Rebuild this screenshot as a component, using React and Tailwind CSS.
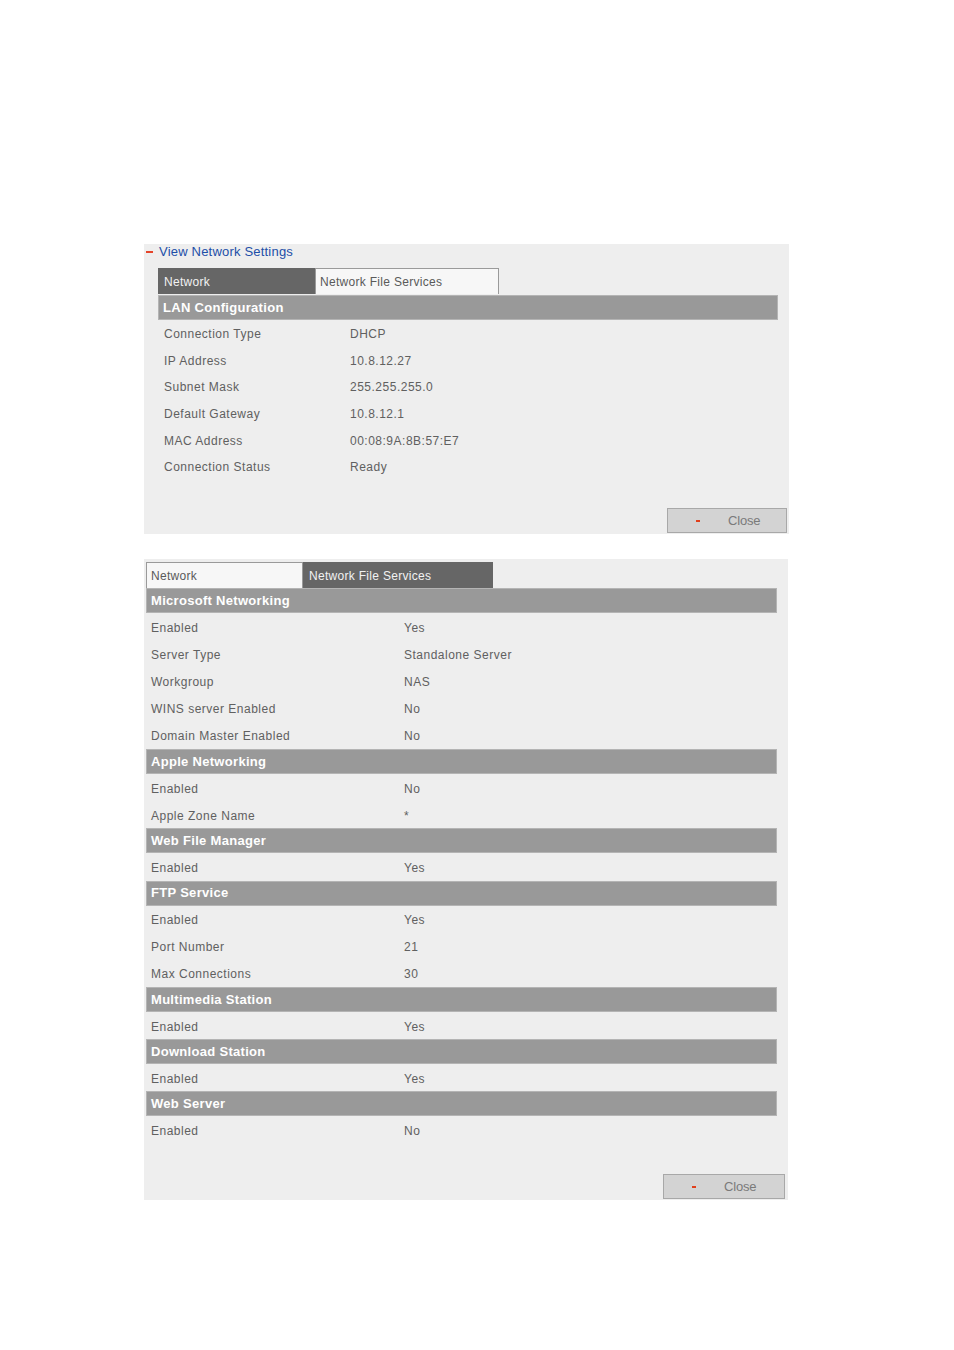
const font = "font-['Liberation_Sans',Arial,sans-serif]";

const lan = [
  ["Connection Type", "DHCP"],
  ["IP Address", "10.8.12.27"],
  ["Subnet Mask", "255.255.255.0"],
  ["Default Gateway", "10.8.12.1"],
  ["MAC Address", "00:08:9A:8B:57:E7"],
  ["Connection Status", "Ready"],
];

const services = [
  {
    title: "Microsoft Networking",
    rows: [
      ["Enabled", "Yes"],
      ["Server Type", "Standalone Server"],
      ["Workgroup", "NAS"],
      ["WINS server Enabled", "No"],
      ["Domain Master Enabled", "No"],
    ],
  },
  { title: "Apple Networking", rows: [["Enabled", "No"], ["Apple Zone Name", "*"]] },
  { title: "Web File Manager", rows: [["Enabled", "Yes"]] },
  {
    title: "FTP Service",
    rows: [
      ["Enabled", "Yes"],
      ["Port Number", "21"],
      ["Max Connections", "30"],
    ],
  },
  { title: "Multimedia Station", rows: [["Enabled", "Yes"]] },
  { title: "Download Station", rows: [["Enabled", "Yes"]] },
  { title: "Web Server", rows: [["Enabled", "No"]] },
];

function SectionBar({ children }) {
  return (
    <div
      className={`flex h-[25px] items-center border border-[#b4b4b4] bg-[#999999] pl-[4px] text-[13px] font-bold tracking-[0.3px] text-white ${font}`}
    >
      {children}
    </div>
  );
}

function Tab({ active, width, children }) {
  return active ? (
    <div
      className={`flex h-[26px] items-center bg-[#666666] pl-[6px] pt-[1px] text-[12px] tracking-[0.3px] text-[#f2f2f2] ${font}`}
      style={{ width }}
    >
      {children}
    </div>
  ) : (
    <div
      className={`flex h-[26px] items-center border border-b-0 border-[#9a9a9a] bg-[#f7f7f7] pl-[4px] pt-[1px] text-[12px] tracking-[0.3px] text-[#5a5a5a] ${font}`}
      style={{ width }}
    >
      {children}
    </div>
  );
}

function Row({ label, value, valueX, labelX, h }) {
  return (
    <div
      className={`flex items-center pt-[2px] text-[12px] tracking-[0.5px] text-[#606060] ${font}`}
      style={{ height: h }}
    >
      <span style={{ width: valueX, paddingLeft: labelX }} className="shrink-0">
        {label}
      </span>
      <span>{value}</span>
    </div>
  );
}

function CloseButton({ width }) {
  return (
    <button
      type="button"
      className={`flex h-[25px] items-center border border-[#a8a8a8] bg-[#d3d3d3] pt-[1px] text-[13px] text-[#7a7a7a] ${font}`}
      style={{ width }}
    >
      <span className="ml-[28px] inline-block h-[2px] w-[4px] bg-[#e0401c]" />
      <span className="ml-[28px] tracking-[-0.2px]">Close</span>
    </button>
  );
}

export default function App() {
  return (
    <div className="min-h-[1350px] w-[954px] bg-white pt-[244px]">
      {/* network panel */}
      <section className="ml-[144px] h-[290px] w-[645px] bg-[#eeeeee]">
        <div className={`flex h-[15px] items-center text-[13px] tracking-[0.2px] text-[#1d4fa8] ${font}`}>
          <span className="ml-[2px] inline-block h-[2px] w-[7px] bg-[#e5442a]" />
          <span className="ml-[6px]">View Network Settings</span>
        </div>
        <div className="ml-[14px] mt-[9px] w-[620px]">
          <div className="flex">
            <Tab active width={157}>Network</Tab>
            <Tab width={184}>Network File Services</Tab>
          </div>
          <div className="mt-[1px]">
            <SectionBar>LAN Configuration</SectionBar>
          </div>
          {lan.map(([l, v]) => (
            <Row key={l} label={l} value={v} labelX={6} valueX={192} h={26.6} />
          ))}
        </div>
        <div className="mr-[2px] mt-[28px] flex justify-end">
          <CloseButton width={120} />
        </div>
      </section>

      {/* services panel */}
      <section className="ml-[144px] mt-[25px] h-[641px] w-[644px] bg-[#eeeeee] pt-[3px]">
        <div className="ml-[2px] w-[631px]">
          <div className="flex">
            <Tab width={157}>Network</Tab>
            <Tab active width={190}>Network File Services</Tab>
          </div>
          {services.map((s) => (
            <div key={s.title}>
              <SectionBar>{s.title}</SectionBar>
              {s.rows.map(([l, v]) => (
                <Row key={l} label={l} value={v} labelX={5} valueX={258} h={27.2} />
              ))}
            </div>
          ))}
        </div>
        <div className="mr-[3px] mt-[30px] flex justify-end">
          <CloseButton width={122} />
        </div>
      </section>
    </div>
  );
}
